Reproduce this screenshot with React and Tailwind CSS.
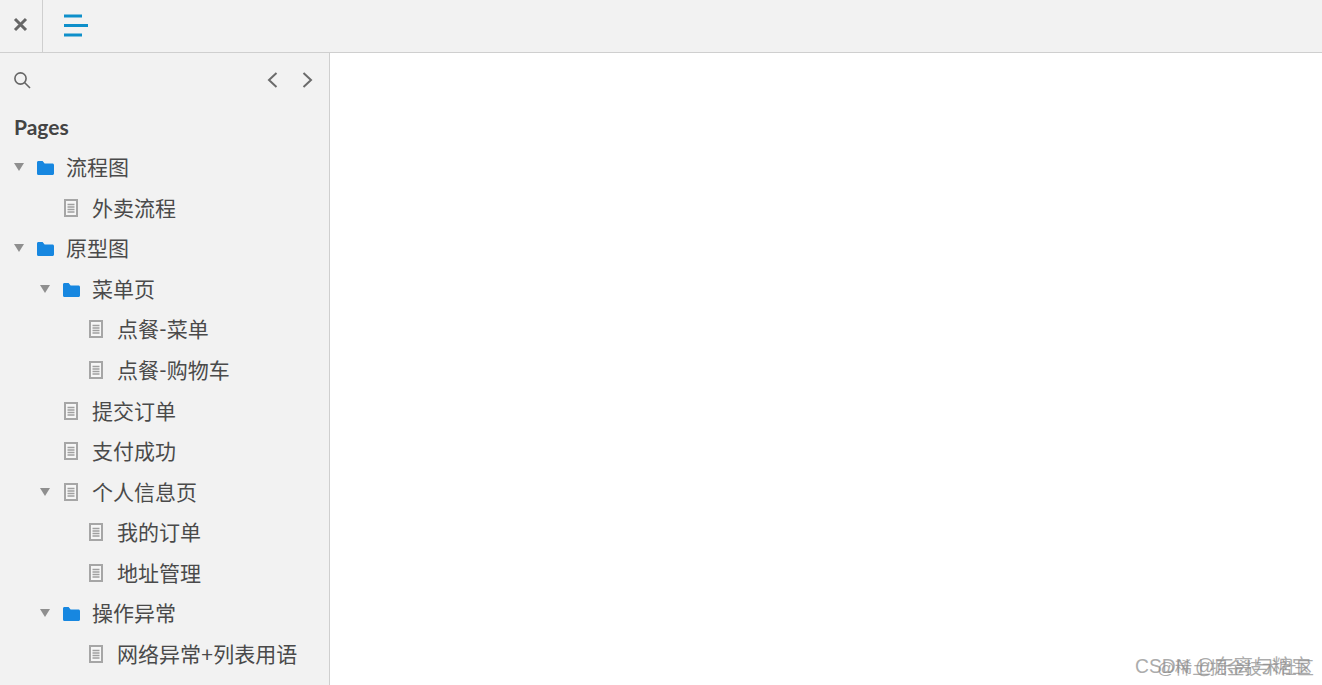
import React from 'react';

const FolderIcon = () => (
  <svg width="18" height="16" viewBox="0 0 18 16" className="mt-[2px] ml-[1px] shrink-0">
    <path d="M1 2.5C1 1.7 1.6 1 2.4 1h4.2l2 2.4h7.9c.8 0 1.5.7 1.5 1.5v8.6c0 .8-.7 1.5-1.5 1.5H2.4C1.6 15 1 14.3 1 13.5z" fill="#1787e0" />
  </svg>
);

const PageIcon = () => (
  <svg width="14" height="18" viewBox="0 0 14 18" className="shrink-0">
    <rect x="1" y="1" width="12" height="16" fill="#f6f6f6" stroke="#a6a6a6" strokeWidth="2" />
    <path d="M3.5 5.5h7M3.5 8h7M3.5 10.5h7M3.5 13h7" stroke="#a0a0a0" strokeWidth="1.4" />
  </svg>
);

const Caret = () => (
  <svg width="10" height="8" viewBox="0 0 10 8" className="ml-[1px] shrink-0">
    <path d="M0 0h10L5 8z" fill="#8f8f8f" />
  </svg>
);

const rows = [
  { label: '流程图', level: 0, icon: 'folder', open: true },
  { label: '外卖流程', level: 1, icon: 'page' },
  { label: '原型图', level: 0, icon: 'folder', open: true },
  { label: '菜单页', level: 1, icon: 'folder', open: true },
  { label: '点餐-菜单', level: 2, icon: 'page' },
  { label: '点餐-购物车', level: 2, icon: 'page' },
  { label: '提交订单', level: 1, icon: 'page' },
  { label: '支付成功', level: 1, icon: 'page' },
  { label: '个人信息页', level: 1, icon: 'page', open: true },
  { label: '我的订单', level: 2, icon: 'page' },
  { label: '地址管理', level: 2, icon: 'page' },
  { label: '操作异常', level: 1, icon: 'folder', open: true },
  { label: '网络异常+列表用语', level: 2, icon: 'page' },
];

const indents = ['pl-[13px]', 'pl-[39px]', 'pl-[64px]'];

const TreeRow = ({ row }) => (
  <div className={`flex h-[40.55px] items-center ${indents[row.level]}`}>
    <span className="flex w-[22px] shrink-0 items-center">{row.open && <Caret />}</span>
    <span className="flex w-[31px] shrink-0 items-center">
      {row.icon === 'folder' ? <FolderIcon /> : <span className="pl-[3px]"><PageIcon /></span>}
    </span>
    <span className="whitespace-nowrap pb-[1px] text-[21px] leading-none text-[#4a4a4a]">{row.label}</span>
  </div>
);

export default function App() {
  return (
    <div className="flex h-[685px] w-[1322px] flex-col overflow-hidden bg-white font-['Lato','Noto_Sans_CJK_SC',sans-serif]">
      {/* Top bar */}
      <div className="flex h-[53px] shrink-0 border-b border-[#cfcfcf] bg-[#f2f2f2]">
        <div className="flex w-[43px] items-center justify-center border-r border-[#cfcfcf] pr-[2px] pb-[4px]">
          <svg width="15" height="15" viewBox="0 0 15 15">
            <path d="M2 2l11 11M13 2L2 13" stroke="#666" strokeWidth="3" />
          </svg>
        </div>
        <div className="flex items-center pl-[21px] pb-[2px]">
          <svg width="24" height="23" viewBox="0 0 24 23">
            <path d="M0 2h18M0 11.5h24M0 21h18" stroke="#0e8fca" strokeWidth="3" />
          </svg>
        </div>
      </div>

      <div className="flex min-h-0 flex-1">
        {/* Sidebar */}
        <div className="w-[330px] shrink-0 overflow-hidden border-r border-[#cfcfcf] bg-[#f2f2f2]">
          <div className="flex h-[53px] items-center justify-between pr-[16px] pl-[13px]">
            <svg width="18" height="18" viewBox="0 0 18 18" fill="none" stroke="#666" strokeWidth="1.6">
              <circle cx="7.5" cy="7.5" r="5.6" />
              <path d="M11.5 11.5l5.5 5.5" />
            </svg>
            <div className="flex items-center gap-[24px]">
              <svg width="11" height="16" viewBox="0 0 11 16" fill="none" stroke="#6b6b6b" strokeWidth="2">
                <path d="M9.5 1L2 8l7.5 7" />
              </svg>
              <svg width="11" height="16" viewBox="0 0 11 16" fill="none" stroke="#6b6b6b" strokeWidth="2">
                <path d="M1.5 1L9 8l-7.5 7" />
              </svg>
            </div>
          </div>
          <div className="flex h-[41px] items-center pl-[14px] text-[21px] font-bold text-[#444]">Pages</div>
          <div>
            {rows.map((row) => (
              <TreeRow key={row.label} row={row} />
            ))}
          </div>
        </div>

        {/* Page area with the overlapping watermarks */}
        <div className="relative flex-1 bg-white">
          <span className="absolute right-[11px] bottom-[9px] whitespace-nowrap text-[19.3px] leading-none text-[#8a8a8a] opacity-70 font-['Liberation_Sans','Noto_Sans_CJK_SC',sans-serif]">CSDN @东离与糖宝</span>
          <span className="absolute right-[8px] bottom-[8px] whitespace-nowrap text-[17.4px] leading-none text-[#8a8a8a] opacity-70 font-['Liberation_Sans','Noto_Sans_CJK_SC',sans-serif]">@稀土掘金技术社区</span>
        </div>
      </div>
    </div>
  );
}
